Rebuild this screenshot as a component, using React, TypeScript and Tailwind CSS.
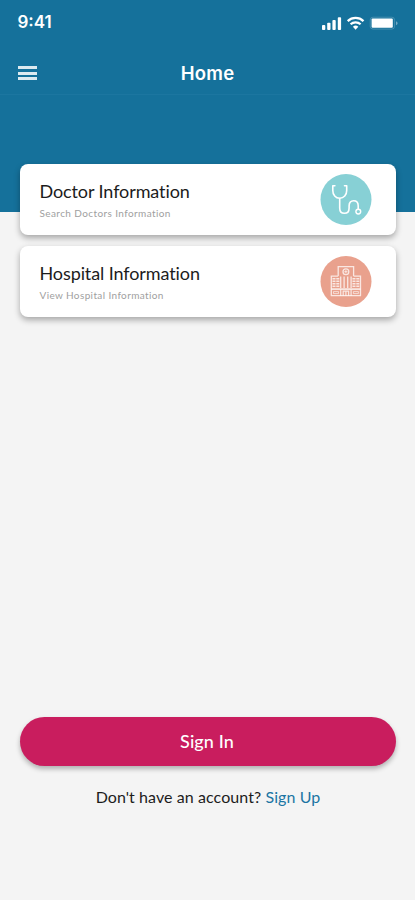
import React from 'react'

interface InfoCardProps {
  title: string
  subtitle: string
  icon: React.ReactNode
  subtitleClass: string
}

function StatusIcons() {
  return (
    <svg width="78" height="16" viewBox="0 0 78 16" fill="none">
      <g fill="#fff">
        <rect x="1" y="10" width="3.3" height="5" rx="0.9" />
        <rect x="6.2" y="7.7" width="3.3" height="7.3" rx="0.9" />
        <rect x="11.4" y="5" width="3.3" height="10" rx="0.9" />
        <rect x="16.8" y="2.2" width="3.3" height="12.8" rx="0.9" />
      </g>
      <g stroke="#fff" strokeWidth="2.2">
        <path d="M26.7 6.1a11.4 11.4 0 0 1 15.8 0" />
        <path d="M29.6 9.3a7.2 7.2 0 0 1 10 0" />
      </g>
      <path d="M31.9 11.7a4 4 0 0 1 5.4 0L34.6 14.8z" fill="#fff" />
      <rect x="49.2" y="2.2" width="24.4" height="11.9" rx="2.8" stroke="#fff" strokeOpacity="0.2" />
      <rect x="50.6" y="3.6" width="21.2" height="9.2" rx="1" fill="#fff" />
      <path d="M75 6.3v4c1.2-.6 1.6-1.2 1.6-2s-.4-1.5-1.6-2z" fill="#fff" fillOpacity="0.4" />
    </svg>
  )
}

function StethoscopeIcon() {
  return (
    <svg width="52" height="52" viewBox="0 0 52 52" fill="none" stroke="#fff" strokeLinecap="round" strokeLinejoin="round">
      <circle cx="26" cy="25.5" r="25.5" fill="#87d0d5" stroke="none" />
      <path d="M14.9 11.8h-2.1v4.6c0 4.6 2.8 7.9 6.9 7.9s7-3.3 7-7.9v-4.6h-2.2" strokeWidth="1.6" />
      <path d="M19.7 24.5v9.4c0 3.5 1.7 5.4 4.7 5.4s4.7-1.9 4.7-5.4v-2.1c0-3.2 1.8-5.1 4.5-5.1s4.6 1.9 4.6 5.1v3.3" strokeWidth="1.6" />
      <circle cx="38.3" cy="37.6" r="2.4" strokeWidth="1.4" />
    </svg>
  )
}

function HospitalIcon() {
  return (
    <svg width="52" height="52" viewBox="0 0 52 52" fill="none" stroke="#fff" strokeOpacity="0.75">
      <circle cx="26" cy="25.5" r="25.5" fill="#e9a18d" stroke="none" />
      <g transform="translate(0 -0.6)">
        <path d="M18.2 20.7V11.3h15.4v9.4M11.3 40.3V20.7h6.9M33.6 20.7h6.9v19.6M10.8 40.3H41" strokeWidth="1.3" />
        <circle cx="25.9" cy="16.3" r="2.9" strokeWidth="1.3" />
        <path d="M25.9 14.7v3.2M24.3 16.3h3.2" strokeWidth="0.9" />
        <path d="M20.7 21v11.5M24.1 21v11.5M27.7 21v11.5M31.1 21v11.5" strokeWidth="1.3" />
        <path d="M12.5 23.4h7M12.5 25.9h7M12.5 28.4h7M12.5 30.9h7M32.5 23.4h7M32.5 25.9h7M32.5 28.4h7M32.5 30.9h7" strokeWidth="1.4" strokeDasharray="3 0.8" />
        <path d="M11.3 33.7h29.2" strokeWidth="1.7" />
        <path d="M20.7 34v6.3M23.2 40.3v-4.6h5.4v4.6M25.9 35.7v4.6M31.1 34v6.3" strokeWidth="1.2" />
        <path d="M13.5 36.2h5v2h-5zM33.4 36.2h5v2h-5z" strokeWidth="0.8" />
      </g>
    </svg>
  )
}

function InfoCard({ title, subtitle, icon, subtitleClass }: InfoCardProps) {
  return (
    <button className="flex h-[71px] w-full items-center justify-between rounded-lg bg-white pl-[19.5px] pr-6 text-left shadow-[0_3px_6px_rgba(0,0,0,0.32)]">
      <div className="flex flex-col pt-px">
        <span className="whitespace-nowrap text-[18px] leading-6 tracking-[-0.1px] text-[#1c1c1c]">{title}</span>
        <span className={`mt-0.5 whitespace-nowrap text-[10px] leading-4 text-[#a0a0a0] ${subtitleClass}`}>{subtitle}</span>
      </div>
      {icon}
    </button>
  )
}

export default function App() {
  return (
    <div className="flex h-[900px] w-[415px] flex-col bg-[#f4f4f4] font-['Lato',sans-serif]">
      <header className="h-[212px] shrink-0 bg-[#15719b] text-white">
        <div className="flex h-[46px] items-center justify-between pl-[17.5px] pr-4 font-['Inter',sans-serif]">
          <span className="text-[17px] font-semibold">9:41</span>
          <StatusIcons />
        </div>
        <div className="grid h-[49px] grid-cols-[1fr_auto_1fr] items-center border-b border-[#1c76a0] px-[18px] pt-[5px] font-['Inter',sans-serif]">
          <button className="flex w-[19px] flex-col gap-[2.5px] pt-px" aria-label="Menu">
            <span className="h-[3px] w-full bg-white/85" />
            <span className="h-[3px] w-full bg-white/85" />
            <span className="h-[3px] w-full bg-white/85" />
          </button>
          <h1 className="text-[18.5px] font-semibold leading-6 tracking-[0.25px]">Home</h1>
        </div>
      </header>

      <main className="-mt-12 flex grow flex-col pl-5 pr-[19px]">
        <div className="flex flex-col gap-[11px]">
          <InfoCard
            title="Doctor Information"
            subtitle="Search Doctors Information"
            icon={<StethoscopeIcon />}
            subtitleClass="tracking-[0.4px]"
          />
          <InfoCard
            title="Hospital Information"
            subtitle="View Hospital Information"
            icon={<HospitalIcon />}
            subtitleClass="tracking-[0.38px]"
          />
        </div>

        <button className="mt-[400px] h-[49px] rounded-full bg-[#c91d5e] pr-0.5 text-[18px] font-medium tracking-[0.1px] text-white shadow-[0_3px_5px_rgba(0,0,0,0.28)]">
          Sign In
        </button>
        <p className="mt-[19px] text-center text-[16px] leading-6 tracking-[0.08px] text-[#1c1c1c]">
          Don't have an account? <a className="text-[#1b75a3]">Sign Up</a>
        </p>
      </main>
    </div>
  )
}
